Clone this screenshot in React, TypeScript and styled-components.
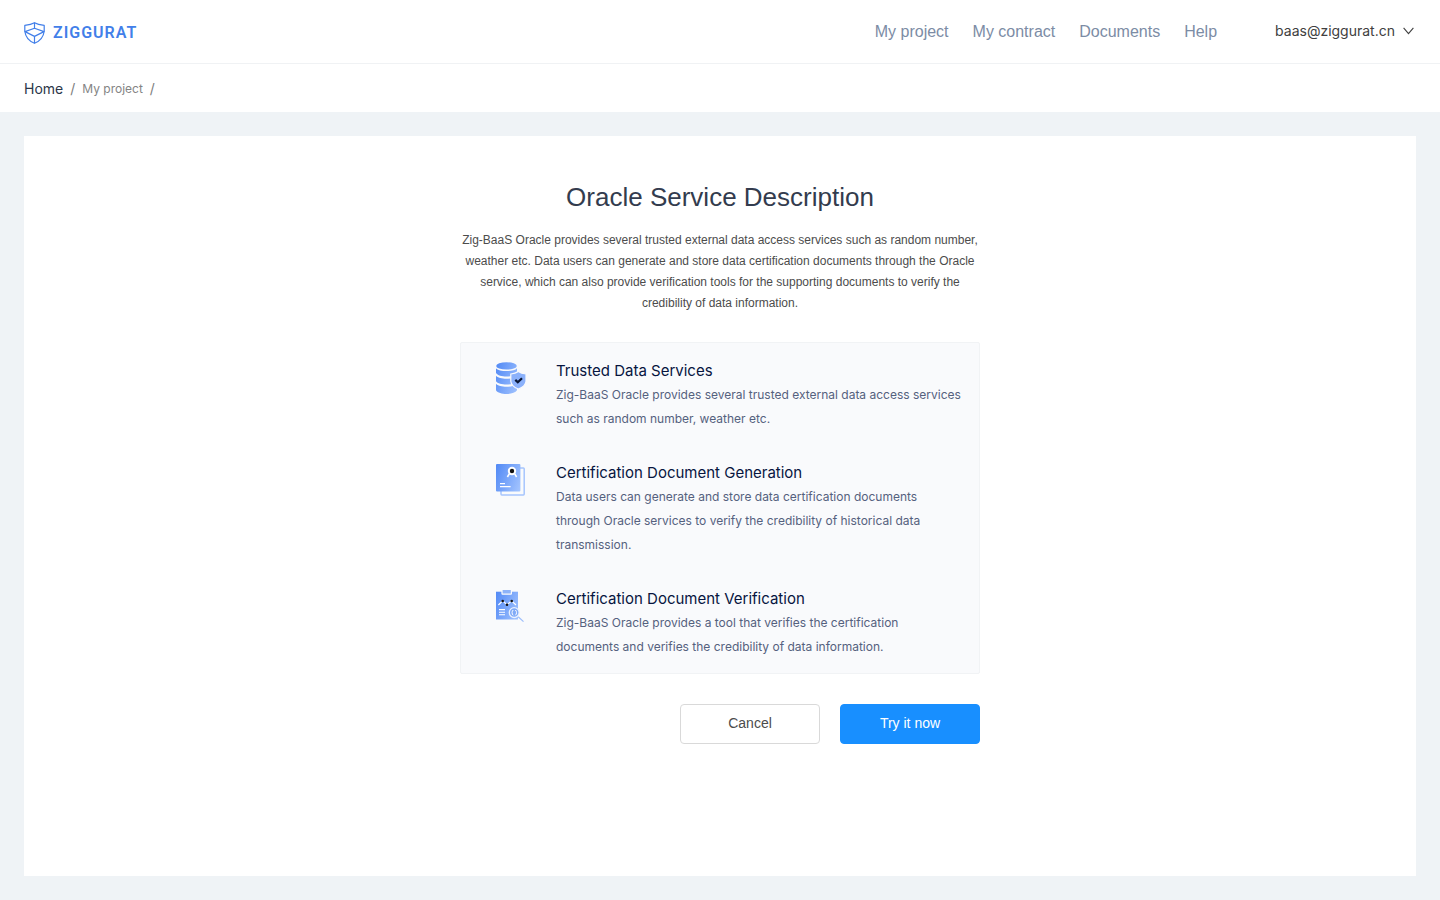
import React from "react";
import styled, { createGlobalStyle, css } from "styled-components";

const GlobalStyle = createGlobalStyle`
  *, *::before, *::after { box-sizing: border-box; }
  body {
    margin: 0;
    background: #eff3f6;
    font-family: Inter, "Noto Sans", sans-serif;
    font-size: 14px;
    color: #333c4e;
  }
  h1, h2, p, ul, ol { margin: 0; padding: 0; font-weight: 400; }
  ul, ol { list-style: none; }
  a { color: inherit; text-decoration: none; }
  svg { display: block; flex: none; }
`;

const helvetica = css`
  font-family: "Liberation Sans", Arial, sans-serif;
`;

const Page = styled.div`
  display: flex;
  flex-direction: column;
  min-height: 100vh;
`;

const Header = styled.header`
  display: flex;
  align-items: center;
  justify-content: space-between;
  height: 64px;
  padding: 0 24px;
  background: #fff;
  border-bottom: 1px solid #f0f2f4;
`;

const Brand = styled.a`
  display: flex;
  align-items: center;
  gap: 8px;
  padding-top: 3px;
  color: #427fe9;
`;

const BrandName = styled.span`
  font-family: Roboto, sans-serif;
  font-size: 16px;
  line-height: 24px;
  font-weight: 600;
  letter-spacing: 1px;
`;

const HeaderRight = styled.div`
  display: flex;
  align-items: center;
  gap: 58px;
`;

const Nav = styled.nav`
  ${helvetica}
  display: flex;
  gap: 24px;
  font-size: 16px;
  line-height: 24px;
  color: #7c8ca5;
`;

const AccountButton = styled.button`
  display: flex;
  align-items: center;
  gap: 8px;
  padding: 0 2px 2px 0;
  border: 0;
  background: none;
  font: inherit;
  line-height: 20px;
  color: #404040;
  cursor: pointer;
`;

const Breadcrumb = styled.nav`
  background: #fff;
  padding: 0 24px;
`;

const Crumbs = styled.ol`
  display: flex;
  height: 48px;
  padding-top: 1px;
  align-items: center;
`;

const Crumb = styled.li<{ $muted?: boolean }>`
  display: flex;
  align-items: center;
  line-height: 20px;
  font-size: ${({ $muted }) => ($muted ? 12 : 14)}px;
  color: ${({ $muted }) => ($muted ? "#848484" : "#2b3648")};

  &::after {
    content: "/";
    margin: 0 7px;
    font-size: 14px;
    color: #7d7d7d;
  }
`;

const Main = styled.main`
  flex: 1;
  display: flex;
  padding: 24px;
`;

const Panel = styled.section`
  flex: 1;
  display: flex;
  flex-direction: column;
  align-items: center;
  padding: 41px 24px;
  background: #fff;
`;

const Content = styled.div`
  width: 100%;
  max-width: 520px;
`;

const Title = styled.h1`
  ${helvetica}
  font-size: 26px;
  line-height: 40px;
  text-align: center;
`;

const Intro = styled.p`
  ${helvetica}
  margin-top: 13px;
  font-size: 12px;
  line-height: 21px;
  text-align: center;
  color: #4c4c4c;
`;

const FeatureList = styled.ul`
  display: flex;
  flex-direction: column;
  gap: 29px;
  margin-top: 28px;
  padding: 15px 16px 14px 35px;
  background: #f9fafc;
  border: 1px solid #f1f3f5;
  border-radius: 2px;
`;

const Feature = styled.li`
  display: flex;
  gap: 28px;

  & > svg { margin-top: 3px; }
`;

const FeatureTitle = styled.h2`
  font-size: 15px;
  line-height: 25px;
  color: #07153f;
`;

const FeatureText = styled.p`
  font-size: 12px;
  line-height: 24px;
  color: #55617e;
`;

const Actions = styled.div`
  display: flex;
  justify-content: flex-end;
  gap: 20px;
  margin-top: 30px;
`;

const Button = styled.button<{ $primary?: boolean }>`
  ${helvetica}
  width: 140px;
  height: 40px;
  padding: 0 0 2px;
  border: 1px solid ${({ $primary }) => ($primary ? "#188fff" : "#d9d9d9")};
  border-radius: 4px;
  background: ${({ $primary }) => ($primary ? "#188fff" : "#fff")};
  color: ${({ $primary }) => ($primary ? "#fff" : "#4c4c4c")};
  font-size: 14px;
  cursor: pointer;
`;

const Logo = () => (
  <svg width="21" height="22" viewBox="0 0 21 22" fill="none" stroke="currentColor" strokeWidth="1.2" strokeLinejoin="round" aria-hidden="true">
    <path d="M10.5 .7C7.6 2.4 4.2 3 .8 3.4V9C1.4 14.6 4.8 19 10.5 21.3C16.2 19 19.6 14.6 20.2 9V3.4C16.8 3 13.4 2.4 10.5 .7Z" />
    <path d="M10.5 .7V6.2M1 9.6L10.5 6.2L20 9.6L10.5 14.4ZM10.5 14.4V21.2" />
  </svg>
);

const Chevron = () => (
  <svg width="11" height="8" viewBox="0 0 11 8" fill="none" stroke="currentColor" strokeWidth="1.1" aria-hidden="true">
    <path d="M.6 .9L5.5 6.7L10.4 .9" />
  </svg>
);

const Gradient = ({ id }: { id: string }) => (
  <linearGradient id={id} x1="0" y1="0" x2="32" y2="12" gradientUnits="userSpaceOnUse">
    <stop stopColor="#5088f5" />
    <stop offset="1" stopColor="#a9c8ff" />
  </linearGradient>
);

const DatabaseIcon = () => (
  <svg width="32" height="34" viewBox="0 0 32 34" aria-hidden="true">
    <defs>
      <Gradient id="database" />
    </defs>
    <g fill="url(#database)">
      <ellipse cx="10.5" cy="4.9" rx="10.3" ry="3.7" />
      <path d="M0 7.2C3 11 18 11 21 7.2V12C18 16.7 3 16.7 0 12Z" />
      <path d="M0 14.7C3 18.7 18 18.7 21 14.7V20.2C18 24.6 3 24.6 0 20.2Z" />
      <path d="M0 22.8C3 26.8 18 26.8 21 22.8V29.2C18 34.2 3 34.2 0 29.2Z" />
    </g>
    <path d="M22.4 10.4C20.3 11.9 17.5 12.7 14.8 13V20.2C15.2 24 18.4 26.5 22.4 28C26.4 26.5 29.7 24 30 20.2V13C27.3 12.7 24.4 11.9 22.4 10.4Z" fill="#8bb1fb" stroke="#f9fafc" strokeWidth="1.2" />
    <path d="M19.3 18.9L21.8 21.3L26 17.2" fill="none" stroke="#081534" strokeWidth="2.2" />
  </svg>
);

const CertificateIcon = () => (
  <svg width="32" height="34" viewBox="0 0 32 34" aria-hidden="true">
    <defs>
      <Gradient id="certificate" />
    </defs>
    <path d="M24 5H27.4Q28.2 5 28.2 5.8V31Q28.2 31.9 27.4 31.9H5.8Q5 31.9 5 31V28" fill="none" stroke="#a6c5fd" strokeWidth="1.5" />
    <rect y="1" width="24.4" height="27.4" rx="1" fill="url(#certificate)" />
    <path d="M13.4 10.6L11.4 14M18.6 10.6L20.6 14" stroke="#fff" strokeWidth="1.6" />
    <circle cx="16" cy="8" r="3.2" fill="#111" stroke="#fff" strokeWidth="2" />
    <path d="M4 20.6H9M4 23.6H14.6" stroke="#fff" strokeWidth="1.2" />
  </svg>
);

const VerifyIcon = () => (
  <svg width="32" height="34" viewBox="0 0 32 34" aria-hidden="true">
    <defs>
      <Gradient id="verify" />
    </defs>
    <rect y="2.7" width="22" height="27.8" fill="url(#verify)" />
    <rect x="6" y=".3" width="9.4" height="4.9" rx=".5" fill="#8db3f9" stroke="#f9fafc" strokeWidth="1.2" />
    <path d="M2.4 16L6.7 11.9L11 15.8L15.6 11.9L20 16" fill="none" stroke="#fff" strokeWidth="1.2" />
    <path d="M3 20.6H9M3 23.2H9M3 25.8H9" stroke="#fff" strokeWidth="1.1" />
    <g fill="#111">
      <circle cx="6.7" cy="12" r="1.3" />
      <circle cx="11" cy="15.7" r="1.3" />
      <circle cx="15.7" cy="12" r="1.3" />
    </g>
    <circle cx="18.2" cy="23.6" r="4.9" fill="#80aaf7" stroke="#e9f1ff" strokeWidth="1.3" />
    <path d="M17.2 21C15.7 22.3 15.7 25 17.2 26.3M19.4 21C20.9 22.3 20.9 25 19.4 26.3" fill="none" stroke="#fff" strokeWidth="1" />
    <path d="M22.2 27.7L27.5 32.6" stroke="#9cbdfb" strokeWidth="1.2" />
  </svg>
);

const navLinks = ["My project", "My contract", "Documents", "Help"];

const features = [
  {
    Icon: DatabaseIcon,
    title: "Trusted Data Services",
    text: "Zig-BaaS Oracle provides several trusted external data access services such as random number, weather etc.",
  },
  {
    Icon: CertificateIcon,
    title: "Certification Document Generation",
    text: "Data users can generate and store data certification documents through Oracle services to verify the credibility of historical data transmission.",
  },
  {
    Icon: VerifyIcon,
    title: "Certification Document Verification",
    text: "Zig-BaaS Oracle provides a tool that verifies the certification documents and verifies the credibility of data information.",
  },
];

export default function App() {
  return (
    <Page>
      <GlobalStyle />
      <Header>
        <Brand href="#">
          <Logo />
          <BrandName>ZIGGURAT</BrandName>
        </Brand>
        <HeaderRight>
          <Nav aria-label="Main">
            {navLinks.map((label) => (
              <a key={label} href="#">{label}</a>
            ))}
          </Nav>
          <AccountButton type="button" aria-haspopup="menu">
            baas@ziggurat.cn
            <Chevron />
          </AccountButton>
        </HeaderRight>
      </Header>
      <Breadcrumb aria-label="Breadcrumb">
        <Crumbs>
          <Crumb><a href="#">Home</a></Crumb>
          <Crumb $muted><a href="#">My project</a></Crumb>
        </Crumbs>
      </Breadcrumb>
      <Main>
        <Panel>
          <Content>
            <Title>Oracle Service Description</Title>
            <Intro>
              Zig-BaaS Oracle provides several trusted external data access services such as random
              number, weather etc. Data users can generate and store data certification documents
              through the Oracle service, which can also provide verification tools for the
              supporting documents to verify the credibility of data information.
            </Intro>
            <FeatureList>
              {features.map(({ Icon, title, text }) => (
                <Feature key={title}>
                  <Icon />
                  <div>
                    <FeatureTitle>{title}</FeatureTitle>
                    <FeatureText>{text}</FeatureText>
                  </div>
                </Feature>
              ))}
            </FeatureList>
            <Actions>
              <Button type="button">Cancel</Button>
              <Button type="button" $primary>Try it now</Button>
            </Actions>
          </Content>
        </Panel>
      </Main>
    </Page>
  );
}
